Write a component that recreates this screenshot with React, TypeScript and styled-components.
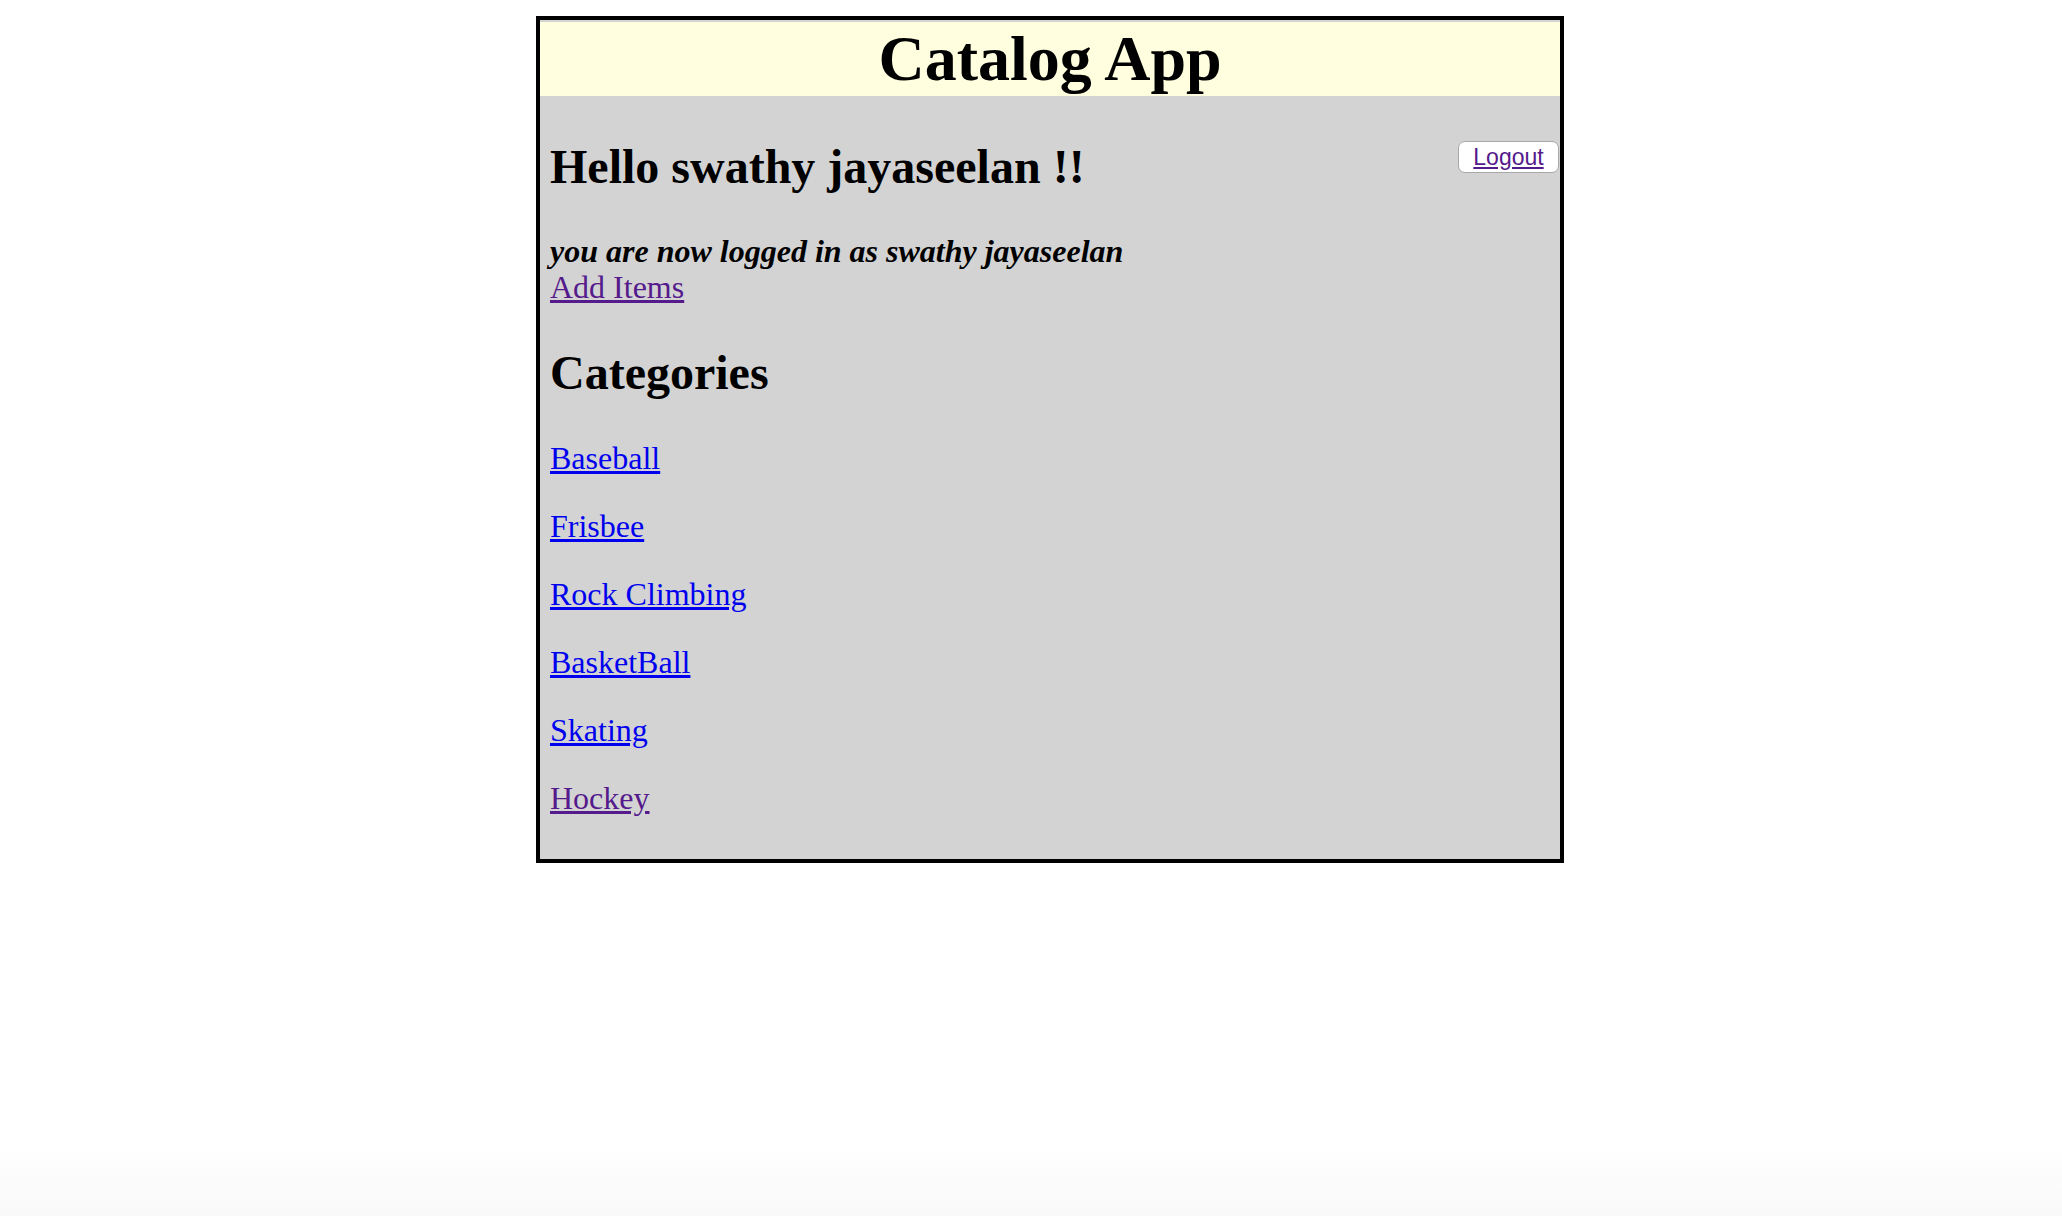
import styled, { createGlobalStyle } from 'styled-components';

const GlobalStyle = createGlobalStyle`
  html {
    min-height: 100%;
    background: linear-gradient(to bottom, #ffffff 1150px, #f8f8f8 1216px);
  }
  body {
    margin: 16px;
    font-family: 'Liberation Serif', 'Times New Roman', serif;
    font-size: 32px;
    line-height: 36px;
    color: #000;
  }
`;

const Container = styled.div`
  width: 1020px;
  margin-left: 520px;
  border: 4px solid #000;
  background-color: #d3d3d3;
`;

const Header = styled.header`
  margin-top: 2px;
  background-color: #ffffe0;
`;

const Title = styled.h1`
  margin: 0;
  font-size: 64px;
  line-height: 74px;
  font-weight: bold;
  text-align: center;
`;

const Content = styled.main`
  display: flow-root;
  padding: 0 1px 11px 10px;
`;

const TopRow = styled.div`
  display: flex;
  justify-content: space-between;
  align-items: flex-start;
`;

const Greeting = styled.h2`
  margin: 43px 0 0;
  font-size: 48px;
  line-height: 55px;
  font-weight: bold;
`;

const LogoutButton = styled.button`
  margin-top: 45px;
  width: 101px;
  height: 32px;
  padding: 0;
  border: 1px solid #a8a8a8;
  border-radius: 7px;
  background-color: #fff;
  font-family: 'Liberation Sans', Arial, sans-serif;
  font-size: 23px;
  line-height: 26px;
  cursor: pointer;
  a {
    color: #551a8b;
  }
`;

const Status = styled.p`
  margin: 39px 0 0;
  font-style: italic;
  font-weight: bold;
`;

const ItemLink = styled.a<{ $visited?: boolean }>`
  color: ${(props) => (props.$visited ? '#551a8b' : '#0000ee')};
  text-decoration: underline;
`;

const SectionTitle = styled.h2`
  margin: 40px 0 40px;
  font-size: 48px;
  line-height: 55px;
  font-weight: bold;
`;

const CategoryList = styled.div``;

const Category = styled.p`
  margin: 0 0 32px;
`;

interface ICategory {
  id: number;
  name: string;
  visited?: boolean;
}

const categories: ICategory[] = [
  { id: 1, name: 'Baseball' },
  { id: 2, name: 'Frisbee' },
  { id: 3, name: 'Rock Climbing' },
  { id: 4, name: 'BasketBall' },
  { id: 5, name: 'Skating' },
  { id: 6, name: 'Hockey', visited: true },
];

const App = () => {
  const userName = 'swathy jayaseelan';

  return (
    <>
      <GlobalStyle />
      <Container>
        <Header>
          <Title>Catalog App</Title>
        </Header>
        <Content>
          <TopRow>
            <Greeting>Hello {userName} !!</Greeting>
            <LogoutButton>
              <a href="#logout">Logout</a>
            </LogoutButton>
          </TopRow>
          <Status>you are now logged in as {userName}</Status>
          <ItemLink href="#add" $visited>
            Add Items
          </ItemLink>
          <SectionTitle>Categories</SectionTitle>
          <CategoryList>
            {categories.map((category) => (
              <Category key={category.id}>
                <ItemLink href={`#category-${category.id}`} $visited={category.visited}>
                  {category.name}
                </ItemLink>
              </Category>
            ))}
          </CategoryList>
        </Content>
      </Container>
    </>
  );
};

export default App;
